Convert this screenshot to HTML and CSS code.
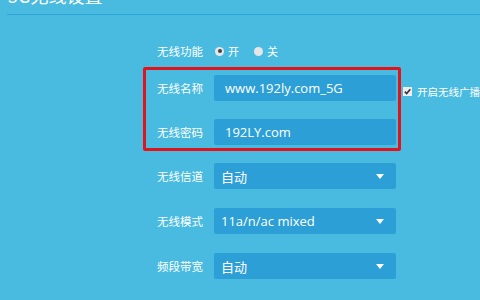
FILE: index.html
```html
<!DOCTYPE html>
<html lang="zh-CN">
<head>
    <meta charset="UTF-8">
    <title>5G无线设置</title>
    <link rel="stylesheet" href="styles.css">
</head>
<body>
    <div class="header">
        <h1>5G无线设置</h1>
    </div>

    <div class="form">
        <div class="row">
            <label class="label">无线功能</label>
            <div class="radios">
                <span class="radio checked"></span><span class="radio-text">开</span>
                <span class="radio"></span><span class="radio-text">关</span>
            </div>
        </div>

        <div class="box-line">
            <div class="red-box">
                <div class="row">
                    <label class="label">无线名称</label>
                    <div class="field">www.192ly.com_5G</div>
                </div>
                <div class="row">
                    <label class="label">无线密码</label>
                    <div class="field">192LY.com</div>
                </div>
            </div>
            <div class="broadcast">
                <span class="checkbox">
                    <svg width="7" height="7" viewBox="0 0 7 7"><path d="M0.8 3.6 L2.7 5.6 L6.3 1.2" fill="none" stroke="#333" stroke-width="1.6"/></svg>
                </span>
                <span>开启无线广播</span>
            </div>
        </div>

        <div class="row select-row first">
            <label class="label">无线信道</label>
            <div class="select">自动<span class="arrow"></span></div>
        </div>
        <div class="row select-row">
            <label class="label">无线模式</label>
            <div class="select">11a/n/ac mixed<span class="arrow"></span></div>
        </div>
        <div class="row select-row">
            <label class="label">频段带宽</label>
            <div class="select">自动<span class="arrow"></span></div>
        </div>
        <div class="row actions-row">
            <span class="label"></span>
            <div class="actions"><button class="save-btn">保存</button></div>
        </div>
    </div>
</body>
</html>
```

FILE: styles.css
```css
body {
    margin: 0;
    background: #49bbe0;
    color: white;
    font-family: "Noto Sans CJK SC", "Noto Sans", sans-serif;
    overflow: hidden;
    height: 300px;
}
.header {
    display: flow-root;
    margin-left: 7px;
    height: 14px;
    border-bottom: 1px solid #30a5d8;
}
.header h1 {
    margin: -16px 0 0 1px;
    font-size: 18px;
    line-height: 22px;
    font-weight: normal;
}
.form {
    margin-left: 143px;
    padding-top: 23px;
}
.row {
    display: flex;
    align-items: center;
    height: 26px;
    padding-left: 14px;
}
.label {
    width: 57px;
    font-size: 11.5px;
    flex-shrink: 0;
}
.radios {
    display: flex;
    align-items: center;
}
.radio {
    width: 9px;
    height: 9px;
    border-radius: 50%;
    background: #e6e6e6;
    display: flex;
    align-items: center;
    justify-content: center;
    margin-left: 1px;
}
.radio.checked::after {
    content: "";
    width: 4px;
    height: 4px;
    border-radius: 50%;
    background: #444;
}
.radio-text {
    font-size: 11px;
    margin: 0 14px 0 4px;
}
.box-line {
    display: flex;
    align-items: flex-start;
    margin-top: 3px;
}
.red-box {
    width: 254px;
    border: 3px solid #e3131b;
    border-radius: 2px;
    padding: 5px 0 3px 0;
    display: flex;
    flex-direction: column;
    gap: 18px;
}
.field,
.select {
    width: 182px;
    height: 26px;
    box-sizing: border-box;
    background: #2c9fd7;
    border-radius: 2px;
    display: flex;
    align-items: center;
    font-family: "Open Sans", "Noto Sans CJK SC", sans-serif;
    font-size: 13px;
}
.red-box .row {
    padding-left: 11px;
}
.field {
    padding-left: 11px;
}
.select {
    padding-left: 7px;
    justify-content: space-between;
    padding-right: 12px;
}
.select-row {
    margin-top: 19px;
}
.select-row.first {
    margin-top: 12px;
}
.arrow {
    width: 0;
    height: 0;
    border-left: 4px solid transparent;
    border-right: 4px solid transparent;
    border-top: 5px solid white;
}
.broadcast {
    display: flex;
    align-items: center;
    margin: 17px 0 0 2px;
    font-size: 10.5px;
    white-space: nowrap;
}
.checkbox {
    width: 9px;
    height: 9px;
    background: #eee;
    display: flex;
    align-items: center;
    justify-content: center;
    margin-right: 5px;
}
.actions-row {
    margin-top: 21px;
}
.actions {
    width: 182px;
    display: flex;
    justify-content: flex-end;
}
.save-btn {
    width: 55px;
    height: 26px;
    border: none;
    border-radius: 2px;
    background: #8fd07a;
    color: white;
}
```
